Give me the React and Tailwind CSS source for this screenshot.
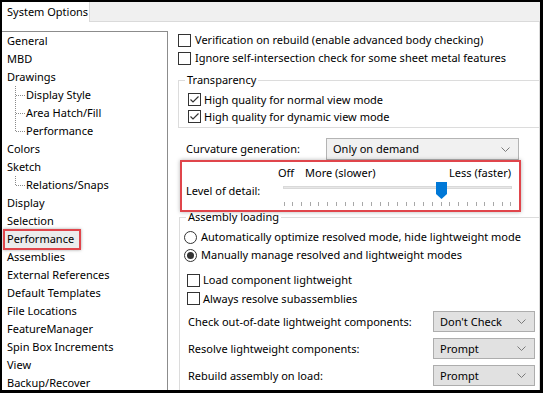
import React from "react";

const tree = [
  { t: "General" },
  { t: "MBD" },
  { t: "Drawings" },
  { t: "Display Style", c: true },
  { t: "Area Hatch/Fill", c: true },
  { t: "Performance", c: true, last: true },
  { t: "Colors" },
  { t: "Sketch" },
  { t: "Relations/Snaps", c: true, last: true },
  { t: "Display" },
  { t: "Selection" },
  { t: "Performance", hl: true },
  { t: "Assemblies" },
  { t: "External References" },
  { t: "Default Templates" },
  { t: "File Locations" },
  { t: "FeatureManager" },
  { t: "Spin Box Increments" },
  { t: "View" },
  { t: "Backup/Recover" },
];

function Connector({ last }) {
  return (
    <svg width="24" height="18" className="shrink-0">
      <line x1="13.5" y1="0" x2="13.5" y2={last ? 9 : 18} stroke="#8a8a8a" strokeWidth="1" strokeDasharray="1 1" />
      <line x1="14" y1="9.5" x2="23" y2="9.5" stroke="#8a8a8a" strokeWidth="1" strokeDasharray="1 1" />
    </svg>
  );
}

function Check({ checked }) {
  return (
    <svg width="13" height="13" className="shrink-0">
      <rect x="0.5" y="0.5" width="12" height="12" fill="#fff" stroke="#333" />
      {checked && <path d="M2.5 6.5 L5 9 L10.5 3.5" fill="none" stroke="#333" strokeWidth="1.2" />}
    </svg>
  );
}

function Radio({ checked }) {
  return (
    <svg width="13" height="13" className="shrink-0">
      <circle cx="6.5" cy="6.5" r="6" fill="#fff" stroke="#333" />
      {checked && <circle cx="6.5" cy="6.5" r="3.5" fill="#333" />}
    </svg>
  );
}

function Chevron() {
  return (
    <svg width="9" height="5" className="shrink-0">
      <path d="M0.5 0.5 L4.5 4.5 L8.5 0.5" fill="none" stroke="#7a7a7a" strokeWidth="1" />
    </svg>
  );
}

function Slider() {
  const ticks = [];
  for (let i = 0; i < 27; i++) {
    const x = Math.round(0.5 + i * (227 / 26)) + 0.5;
    ticks.push(<line key={i} x1={x} y1="21" x2={x} y2="25" stroke="#a8a8a8" strokeWidth="1" />);
  }
  return (
    <svg width="229" height="28" className="shrink-0">
      <rect x="0.5" y="5.5" width="228" height="2" fill="#e7e7e7" stroke="#d9d9d9" />
      {ticks}
      <path d="M153 1 H164 V13 L158.5 18 L153 13 Z" fill="#0078d7" />
    </svg>
  );
}

function Dropdown({ label, className }) {
  return (
    <div className={"flex items-center justify-between border border-[#adadad] pl-[6px] pr-[8px] " + className}>
      <span>{label}</span>
      <Chevron />
    </div>
  );
}

export default function App() {
  return (
    <div className="w-[543px] h-[393px] overflow-hidden border-t-2 border-l-2 border-r-[3px] border-b-[3px] border-black bg-white flex flex-col font-['Noto_Sans',sans-serif] text-[11px] leading-[16px] text-black whitespace-nowrap">
      <div className="h-[20px] flex shrink-0">
        <div className="w-[88px] flex items-center pl-[5px] bg-white border-r border-[#d9d9d9]">System Options</div>
        <div className="flex-1 bg-[#f0f0f0] border-b border-[#dadada]" />
      </div>
      <div className="flex flex-1 min-h-0">
        <div className="w-[166px] shrink-0 flex flex-col pt-[9px]">
          <div className="flex-1 border-t border-r border-[#8c8c8c] overflow-hidden">
            {tree.map((it, i) => (
              <div key={i} className={"h-[18px] flex items-center " + (it.c ? "" : "pl-[5px]")}>
                {it.c && <Connector last={it.last} />}
                {it.hl ? (
                  <span className="relative">
                    <span className="absolute -left-[4px] -right-[7px] -top-[2px] -bottom-[3px] border-2 border-[#e0454b] bg-[#ececec] shadow-[0_0_3px_rgba(0,0,0,0.35)]" />
                    <span className="relative">{it.t}</span>
                  </span>
                ) : (
                  <span>{it.t}</span>
                )}
              </div>
            ))}
          </div>
        </div>
        <div className="flex-1 flex flex-col pt-[9px] border-r border-[#d9d9d9] min-w-0">
          <div className="h-[18px] flex items-center gap-[4px] pl-[10px]">
            <Check />
            <span>Verification on rebuild (enable advanced body checking)</span>
          </div>
          <div className="h-[18px] flex items-center gap-[4px] pl-[10px]">
            <Check />
            <span>Ignore self-intersection check for some sheet metal features</span>
          </div>
          <fieldset className="mt-[5px] ml-[10px] border-t border-l border-b border-[#dcdcdc] pt-[3px] pb-[2px]">
            <legend className="ml-[6px] px-[2px] leading-[16px]">Transparency</legend>
            <div className="h-[17px] flex items-center gap-[3px] pl-[9px]">
              <Check checked />
              <span>High quality for normal view mode</span>
            </div>
            <div className="h-[17px] flex items-center gap-[3px] pl-[9px]">
              <Check checked />
              <span>High quality for dynamic view mode</span>
            </div>
          </fieldset>
          <div className="mt-[10px] h-[22px] flex items-center pl-[18px]">
            <span className="w-[140px] shrink-0">Curvature generation:</span>
            <Dropdown label="Only on demand" className="w-[193px] h-[22px] bg-[#f1f1f1] border-[#b4b4b4] pl-[5px] pr-[6px]" />
          </div>
          <div className="ml-[12px] w-[341px] h-[52px] shrink-0 border-2 border-[#e0454b] shadow-[0_0_4px_rgba(0,0,0,0.3)] flex flex-col pt-[3px]">
            <div className="h-[16px] flex items-center pl-[96px] pr-[8px]">
              <span className="w-[27px]">Off</span>
              <span>More (slower)</span>
              <span className="flex-1" />
              <span>Less (faster)</span>
            </div>
            <div className="flex pl-[4px]">
              <span className="w-[97px] pt-[2px]">Level of detail:</span>
              <Slider />
            </div>
          </div>
          <fieldset className="ml-[11px] flex-1 border-t border-l border-[#dcdcdc]">
            <legend className="ml-[6px] px-[2px] leading-[10px]">Assembly loading</legend>
            <div className="mt-[6px] h-[18px] flex items-center gap-[4px] pl-[4px]">
              <Radio />
              <span>Automatically optimize resolved mode, hide lightweight mode</span>
            </div>
            <div className="h-[18px] flex items-center gap-[4px] pl-[4px]">
              <Radio checked />
              <span>Manually manage resolved and lightweight modes</span>
            </div>
            <div className="mt-[7px] h-[18px] flex items-center gap-[3px] pl-[7px]">
              <Check />
              <span>Load component lightweight</span>
            </div>
            <div className="h-[19px] flex items-center gap-[3px] pl-[7px]">
              <Check />
              <span>Always resolve subassemblies</span>
            </div>
            <div className="mt-[3px] h-[21px] flex items-center pl-[8px]">
              <span className="w-[245px] shrink-0">Check out-of-date lightweight components:</span>
              <Dropdown label="Don't Check" className="w-[102px] h-[21px] bg-[#e1e1e1]" />
            </div>
            <div className="mt-[6px] h-[21px] flex items-center pl-[8px]">
              <span className="w-[245px] shrink-0">Resolve lightweight components:</span>
              <Dropdown label="Prompt" className="w-[102px] h-[21px] bg-[#e1e1e1]" />
            </div>
            <div className="mt-[6px] h-[21px] flex items-center pl-[8px]">
              <span className="w-[245px] shrink-0">Rebuild assembly on load:</span>
              <Dropdown label="Prompt" className="w-[102px] h-[21px] bg-[#e1e1e1]" />
            </div>
          </fieldset>
        </div>
      </div>
    </div>
  );
}
